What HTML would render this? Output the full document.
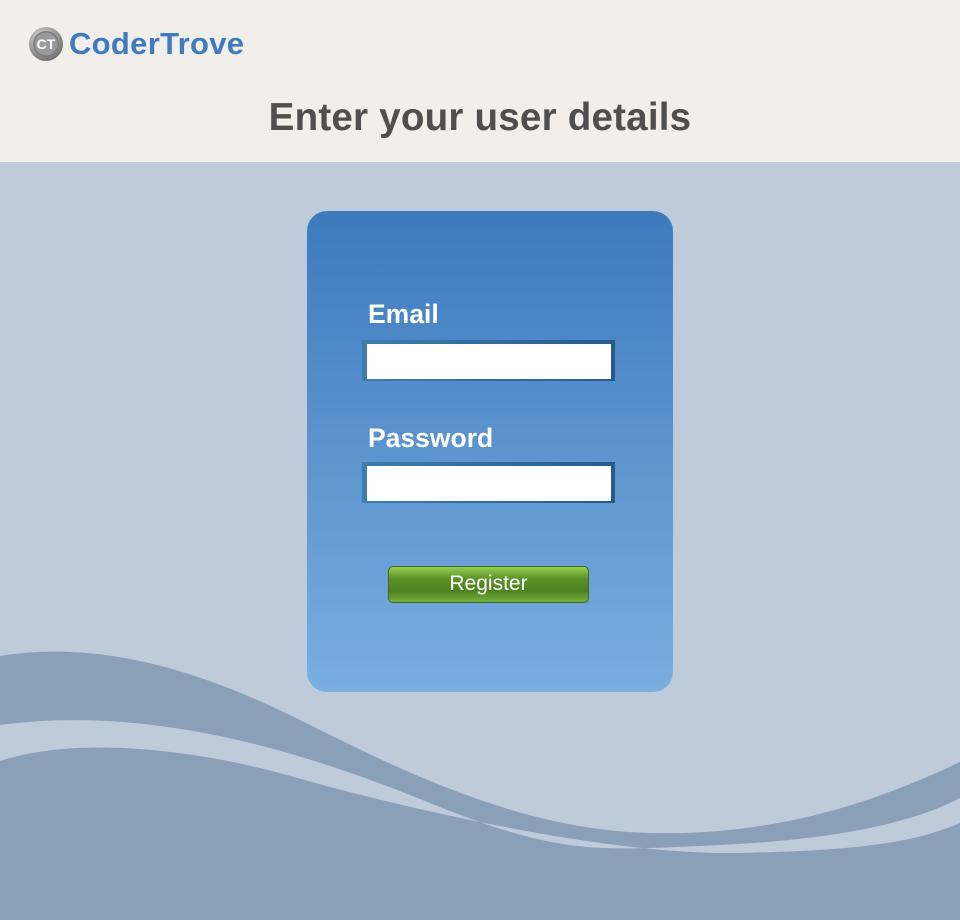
<!DOCTYPE html>
<html><head><meta charset="utf-8">
<style>
*{margin:0;padding:0;box-sizing:border-box}
body{width:960px;height:920px;background:#bfcadb;font-family:"Liberation Sans",sans-serif;position:relative;overflow:hidden}
.hdr{position:absolute;left:0;top:0;width:960px;height:162px;background:#f2efea}
.logo{position:absolute;left:28px;top:26px;display:flex;align-items:center}
.logo span{font-size:31px;font-weight:bold;color:#3f7bbf;margin-left:5px;letter-spacing:0.3px}
h1{position:absolute;top:96px;left:0;width:960px;text-align:center;font-size:38.6px;font-weight:bold;color:#4f4f4f;letter-spacing:0.2px}
svg.w{position:absolute;left:0;top:0}
.card{position:absolute;left:307px;top:211px;width:366px;height:481px;border-radius:20px;background:linear-gradient(#3d7abd,#7aaee1)}
.lbl{position:absolute;left:61px;color:#fff;font-size:26.5px;font-weight:bold}
.inp{position:absolute;left:55px;width:253px;height:41px;background:linear-gradient(90deg,#3d7eab,#265b8c);padding:4px 4px 2px 5px}
.inp div{background:#fff;width:100%;height:100%}
.btn{position:absolute;left:81px;top:355px;width:201px;height:37px;border-radius:5px;background:linear-gradient(#94cf52 0%,#5a8f26 35%,#4f8220 70%,#76b23d 100%);border:1px solid #3f6a1a;color:#fff;font-size:21px;text-align:center;line-height:33px}
</style></head><body>
<div class="hdr"></div>
<div class="logo">
<svg width="36" height="36" viewBox="0 0 36 36"><defs><radialGradient id="g" cx="40%" cy="35%" r="70%"><stop offset="0" stop-color="#e8e8e8"/><stop offset="1" stop-color="#6a6a6a"/></radialGradient></defs><circle cx="18" cy="18" r="17" fill="url(#g)"/><circle cx="18" cy="18" r="13" fill="#7a7a7a"/><circle cx="18" cy="18" r="11.5" fill="#9a9a9a"/><text x="18" y="23" text-anchor="middle" font-family="Liberation Sans" font-size="14" font-weight="bold" fill="#fff">CT</text></svg>
<span>CoderTrove</span></div>
<h1>Enter your user details</h1>
<svg class="w" width="960" height="920" viewBox="0 0 960 920">
<path fill="#8aa0b7" d="M0 656 C100 640 200 670 300 720 S520 830 650 833 S880 800 960 762 L960 920 L0 920 Z"/>
<path fill="#bfcadb" d="M0 725 C150 705 300 750 430 803 S600 850 700 846 S900 830 960 798 L960 823 C920 840 870 851 735 853 C600 855 388 804 294 777 C200 750 80 735 0 761 Z"/>
</svg>
<div class="card">
<div class="lbl" style="top:88px">Email</div>
<div class="inp" style="top:129px"><div></div></div>
<div class="lbl" style="top:212px">Password</div>
<div class="inp" style="top:251px"><div></div></div>
<div class="btn">Register</div>
</div>
</body></html>
